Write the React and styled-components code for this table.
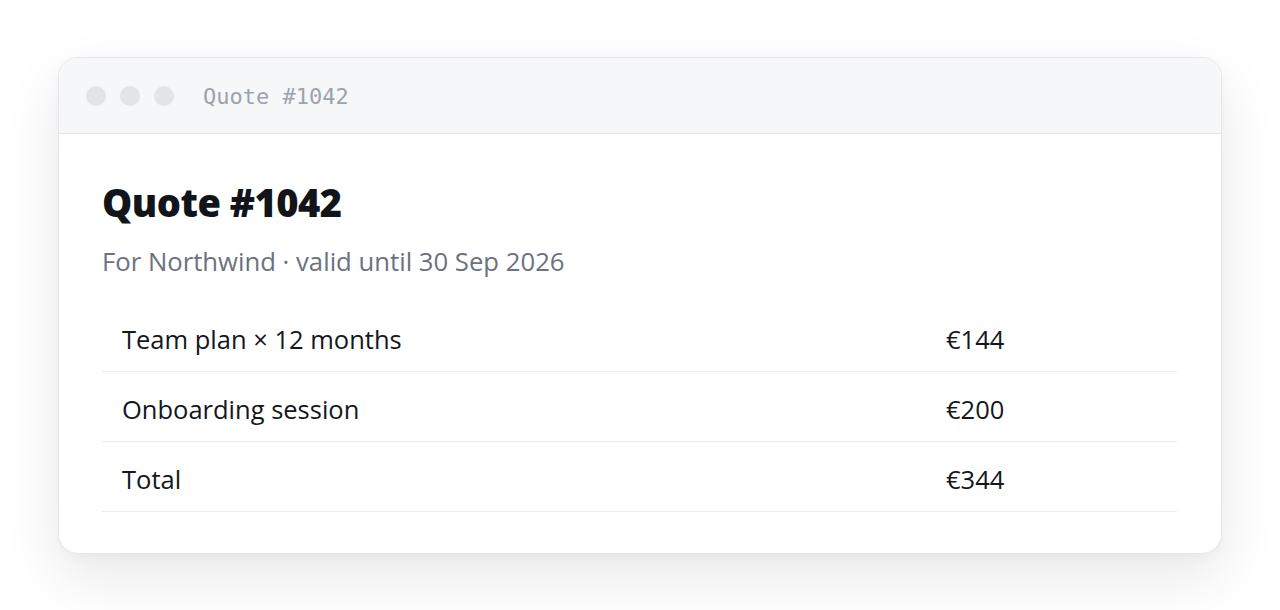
import React from "react"
import styled, { createGlobalStyle } from "styled-components"

const GlobalStyle = createGlobalStyle`
  html, body {
    margin: 0;
    padding: 0;
    background: #ffffff;
    font-family: "Open Sans", "Noto Sans", sans-serif;
  }
`

const Page = styled.div`
  padding: 57px 58px;
  min-height: 610px;
  box-sizing: border-box;
`

const Window = styled.div`
  background: #ffffff;
  border: 1px solid #e5e7eb;
  border-radius: 20px;
  overflow: hidden;
  box-shadow: 0 24px 60px rgba(0, 0, 0, 0.09), 0 4px 12px rgba(0, 0, 0, 0.03);
`

const TitleBar = styled.div`
  display: flex;
  align-items: center;
  height: 76px;
  padding: 1px 27px 0;
  box-sizing: border-box;
  background: #f6f7f8;
  border-bottom: 1px solid #e3e5e8;
`

const Dots = styled.div`
  display: flex;
  gap: 14px;
  margin-right: 29px;
`

const Dot = styled.span`
  width: 20px;
  height: 20px;
  border-radius: 50%;
  background: #e2e4e7;
`

const WindowTitle = styled.span`
  font-family: "DejaVu Sans Mono", "Liberation Mono", monospace;
  font-size: 22px;
  color: #9ca3af;
`

const Body = styled.div`
  padding: 46px 44px 41px 43px;
`

const Heading = styled.h1`
  margin: 0;
  font-size: 38px;
  font-weight: 800;
  line-height: 1.2;
  color: #111418;
  letter-spacing: -0.5px;
`

const Subtitle = styled.p`
  margin: 18px 0 0;
  font-size: 25.7px;
  line-height: 1.4;
  color: #6b7280;
`

const Table = styled.div`
  margin-top: 22px;
  display: grid;
  grid-template-columns: 1fr 251px;
`

const Cell = styled.div`
  height: 70px;
  box-sizing: border-box;
  display: flex;
  align-items: center;
  padding: 5px 20px 0;
  font-size: 25.5px;
  color: #14171c;
  border-bottom: 1px solid #ebecee;
`

const items = [
  { label: "Team plan × 12 months", amount: "€144" },
  { label: "Onboarding session", amount: "€200" },
  { label: "Total", amount: "€344" },
]

export default function App() {
  return (
    <>
      <GlobalStyle />
      <Page>
        <Window>
          <TitleBar>
            <Dots>
              <Dot />
              <Dot />
              <Dot />
            </Dots>
            <WindowTitle>Quote #1042</WindowTitle>
          </TitleBar>
          <Body>
            <Heading>Quote #1042</Heading>
            <Subtitle>For Northwind · valid until 30 Sep 2026</Subtitle>
            <Table>
              {items.map((item) => (
                <React.Fragment key={item.label}>
                  <Cell>{item.label}</Cell>
                  <Cell>{item.amount}</Cell>
                </React.Fragment>
              ))}
            </Table>
          </Body>
        </Window>
      </Page>
    </>
  )
}
